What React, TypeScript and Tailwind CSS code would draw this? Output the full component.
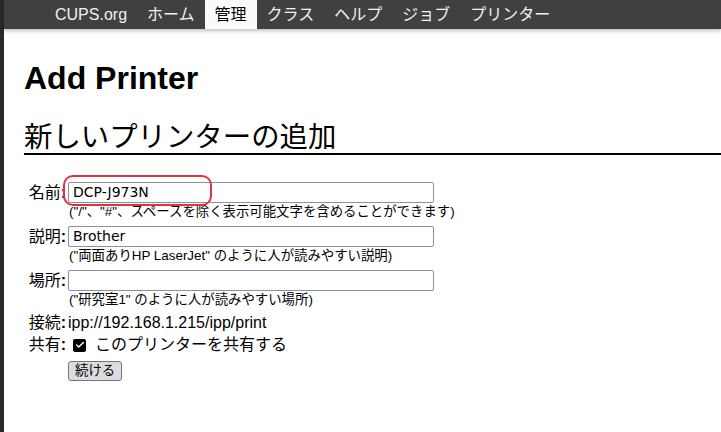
import { Check } from 'lucide-react';

const navItems = ['CUPS.org', 'ホーム', '管理', 'クラス', 'ヘルプ', 'ジョブ', 'プリンター'];

function FieldGroup({ label, value, help }: { label: string; value: string; help: string }) {
  return (
    <div className="mb-[5px] grid grid-cols-[44px_1fr]">
      <div className="flex h-[21px] items-center justify-end pr-[2px]">
        {label}
        <b>:</b>
      </div>
      <div className="h-[21px]">
        <div className="flex h-[21px] w-[366px] items-center rounded-[2px] border border-[#8f8f9d] bg-white px-[4px] font-['DejaVu_Sans',sans-serif] text-[14px] text-black">
          {value}
        </div>
      </div>
      <div />
      <div className="h-[18px] pl-[1px] text-[13.4px] leading-[18px]">{help}</div>
    </div>
  );
}

export default function App() {
  return (
    <div className="flex h-[432px] w-[721px] overflow-hidden bg-white font-['Liberation_Sans','Noto_Sans_CJK_JP',sans-serif] text-black">
      <div className="w-[4px] shrink-0 bg-[#2a2a2a]" />
      <div className="relative flex-1">
        {/* Nav */}
        <nav className="flex h-[29px] items-stretch bg-[#404040] pl-[41px] text-[16px] text-[#f0f0f0] shadow-[0_2px_4px_rgba(0,0,0,0.25)]">
          {navItems.map((item) => (
            <span
              key={item}
              className={
                item === '管理'
                  ? 'flex items-center bg-[#fafafa] px-[10px] text-black'
                  : 'flex items-center px-[10px]'
              }
            >
              {item}
            </span>
          ))}
        </nav>

        <div className="pl-[20px]">
          <h1 className="mt-[31px] text-[32px] leading-[37px] font-bold">Add Printer</h1>
          <h2 className="mt-[24px] border-b-2 border-black text-[28.4px] leading-[32px] font-normal">
            新しいプリンターの追加
          </h2>

          <div className="mt-[27px] text-[16px]">
            <FieldGroup label="名前" value="DCP-J973N" help={'("/"、"#"、スペースを除く表示可能文字を含めることができます)'} />
            <FieldGroup label="説明" value="Brother" help={'("両面ありHP LaserJet" のように人が読みやすい説明)'} />
            <FieldGroup label="場所" value="" help={'("研究室1" のように人が読みやすい場所)'} />

            <div className="mt-[-1px] grid grid-cols-[44px_1fr] items-center">
              <div className="flex h-[20px] items-center justify-end pr-[2px]">
                接続<b>:</b>
              </div>
              <div className="h-[20px] leading-[20px]">ipp://192.168.1.215/ipp/print</div>
              <div className="flex h-[24px] items-center justify-end pr-[2px]">
                共有<b>:</b>
              </div>
              <div className="flex h-[24px] items-center">
                <span className="ml-[5px] flex h-[13px] w-[13px] items-center justify-center rounded-[2px] bg-black">
                  <Check size={10} strokeWidth={3.5} className="text-white" />
                </span>
                <span className="ml-[9px]">このプリンターを共有する</span>
              </div>
              <div />
              <div className="mt-[1px]">
                <button className="h-[20px] rounded-[3px] border border-[#767676] bg-[#dcdce0] px-[6px] text-[13.4px] leading-[18px]">
                  続ける
                </button>
              </div>
            </div>
          </div>
        </div>

        {/* red annotation ring */}
        <div className="absolute top-[175px] left-[59px] h-[31px] w-[149px] rounded-[10px] border-2 border-[#e0343c]" />
      </div>
    </div>
  );
}
